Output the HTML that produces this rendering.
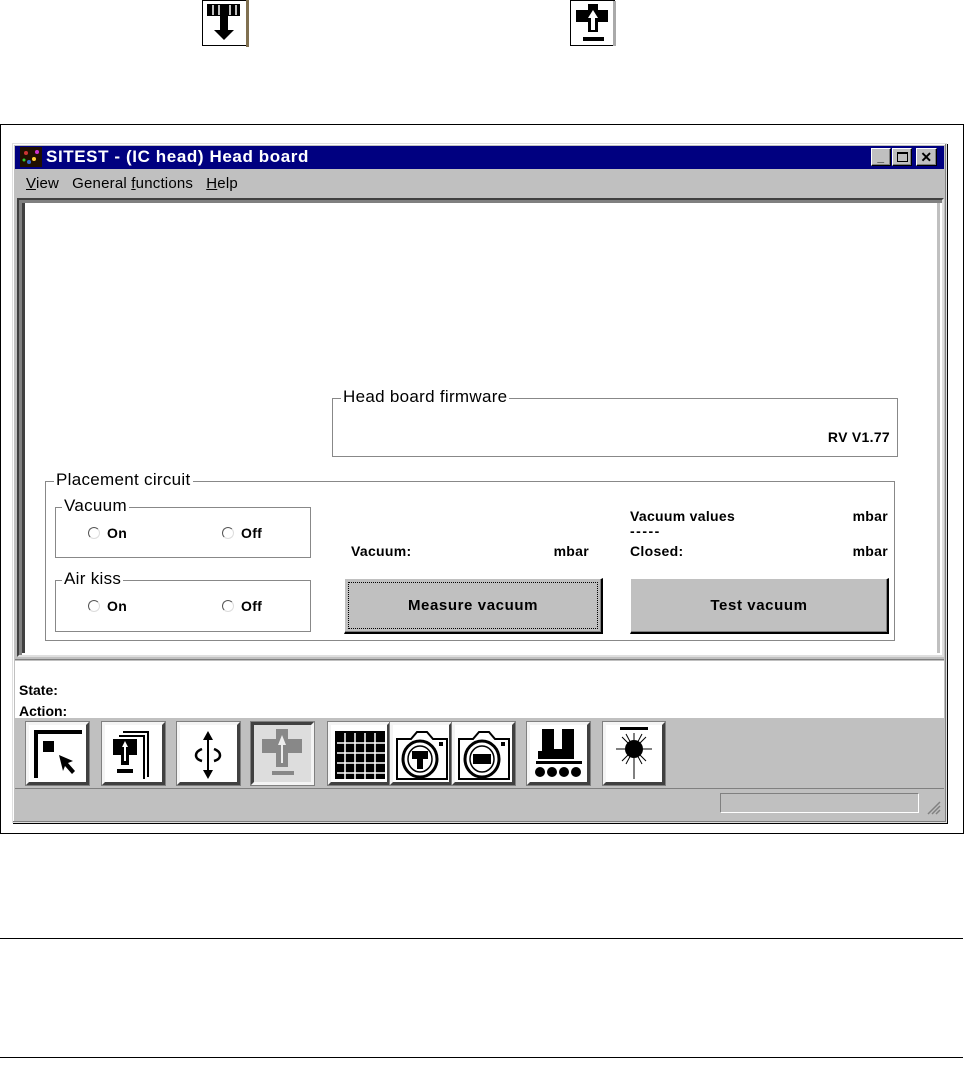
<!DOCTYPE html>
<html><head><meta charset="utf-8"><style>
*{margin:0;padding:0;box-sizing:border-box}
body{width:965px;height:1085px;background:#fff;position:relative;font-family:"Liberation Sans",sans-serif;overflow:hidden}
.a{position:absolute}
.t{position:absolute;font-size:13px;white-space:nowrap;color:#000}
.b{font-weight:bold;font-size:14px;letter-spacing:0.3px}
.r{text-align:right}
.grp{position:absolute;border:1px solid #888;box-shadow:1px 1px 0 #fff inset}
.lbl{position:absolute;background:#fff;font-size:17px;padding:0 2px;top:-12px;left:8px;line-height:19px;letter-spacing:0.3px}
.btn{position:absolute;background:#c0c0c0;border-top:1px solid #fff;border-left:1px solid #fff;border-right:2px solid #000;border-bottom:2px solid #000;box-shadow:inset -1px -1px 0 #808080;display:flex;align-items:center;justify-content:center;font-weight:bold;font-size:15px;letter-spacing:0.6px}
.tb{position:absolute;top:722px;height:63px;background:#fff;border:3px solid #c0c0c0;border-top-color:#f4f4f4;border-left-color:#f4f4f4;border-right-color:#404040;border-bottom-color:#404040;outline:1px solid #808080}
.radio{display:inline-block;width:12px;height:12px;border-radius:50%;border:1px solid #555;border-right-color:#ddd;border-bottom-color:#ddd;vertical-align:-1px;margin-right:7px;background:#fff}
</style></head><body>

<svg class="a" style="left:202px;top:0" width="47" height="47"><rect x="0.5" y="0.5" width="44" height="45" fill="#fff" stroke="#000"/><rect x="44" y="0" width="3" height="47" fill="#807050"/><path d="M5 4h33v12H26v14h6l-10 10-10-10h6V16H5z" fill="#000"/><path d="M11 5v10M17 5v10M28 5v10M34 5v10" stroke="#fff" stroke-width="1.5"/></svg>
<svg class="a" style="left:570px;top:0" width="47" height="47"><rect x="0.5" y="0.5" width="44" height="45" fill="#fff" stroke="#000"/><rect x="43" y="1" width="3" height="45" fill="#aaa"/><path d="M18 4h10v6h10v12H28v10h-10V22H6V10h12z" fill="#000"/><path d="M23 10l-5 8h3v12h4V18h3z" fill="#fff"/><rect x="13" y="37" width="21" height="4" fill="#000"/></svg>

<div class="a" style="left:0;top:124px;width:964px;height:710px;border:1px solid #000"></div>

<div class="a" style="left:12px;top:143px;width:935px;height:680px;background:#c0c0c0;border:1px solid #dfdfdf;box-shadow:1px 1px 0 #000,inset -1px -1px 0 #808080,inset 1px 1px 0 #fff"></div>
<div class="a" style="left:15px;top:146px;width:929px;height:23px;background:#000080"></div>
<svg class="a" style="left:20px;top:147px" width="22" height="20"><rect width="22" height="20" fill="#201000"/><circle cx="6" cy="6" r="2" fill="#c33"/><circle cx="14" cy="12" r="2" fill="#fc3"/><circle cx="9" cy="15" r="2" fill="#36c"/><circle cx="17" cy="5" r="2" fill="#c3c"/><circle cx="4" cy="13" r="1.5" fill="#3c3"/></svg>
<div class="t" style="left:46px;top:147px;color:#fff;font-weight:bold;font-size:17px;letter-spacing:0.6px">SITEST - (IC head) Head board</div>
<div class="btn" style="left:871px;top:148px;width:20px;height:18px;font-size:12px;border-right-width:1px;border-bottom-width:1px">_</div>
<div class="btn" style="left:892px;top:148px;width:20px;height:18px;border-right-width:1px;border-bottom-width:1px"><div style="width:11px;height:10px;border:1px solid #000;border-top-width:2px"></div></div>
<div class="btn" style="left:916px;top:148px;width:21px;height:18px;font-size:14px;border-right-width:1px;border-bottom-width:1px">✕</div>

<div class="t" style="left:26px;top:175px;font-size:15px;letter-spacing:0.2px"><u>V</u>iew&nbsp;&nbsp; General <u>f</u>unctions&nbsp;&nbsp; <u>H</u>elp</div>

<div class="a" style="left:17px;top:198px;width:927px;height:459px;background:#fff;border:2px solid #404040;border-right-color:#dfdfdf;border-bottom-color:#dfdfdf;box-shadow:inset 3px 3px 0 #808080"></div>
<div class="a" style="left:22px;top:203px;width:3px;height:450px;background:#404040"></div>
<div class="a" style="left:937px;top:203px;width:3px;height:450px;background:#c0c0c0"></div>

<div class="grp" style="left:332px;top:398px;width:566px;height:59px"><div class="lbl">Head board firmware</div></div>
<div class="t b r" style="left:690px;width:200px;top:429px">RV V1.77</div>

<div class="grp" style="left:45px;top:481px;width:850px;height:160px"><div class="lbl" style="left:8px">Placement circuit</div></div>
<div class="grp" style="left:55px;top:507px;width:256px;height:51px"><div class="lbl" style="left:6px">Vacuum</div></div>
<div class="t b" style="left:88px;top:525px"><span class="radio"></span>On</div>
<div class="t b" style="left:222px;top:525px"><span class="radio"></span>Off</div>
<div class="grp" style="left:55px;top:580px;width:256px;height:52px"><div class="lbl" style="left:6px">Air kiss</div></div>
<div class="t b" style="left:88px;top:598px"><span class="radio"></span>On</div>
<div class="t b" style="left:222px;top:598px"><span class="radio"></span>Off</div>

<div class="t b" style="left:351px;top:543px">Vacuum:</div>
<div class="t b r" style="left:489px;width:100px;top:543px">mbar</div>
<div class="btn" style="left:344px;top:578px;width:259px;height:56px"><div style="position:absolute;left:3px;top:3px;right:3px;bottom:3px;border:1px dotted #000"></div>Measure vacuum</div>
<div class="t b" style="left:630px;top:508px">Vacuum values</div>
<div class="t b r" style="left:788px;width:100px;top:508px">mbar</div>
<div class="t b" style="left:630px;top:523px;letter-spacing:1.5px">-----</div>
<div class="t b" style="left:630px;top:543px">Closed:</div>
<div class="t b r" style="left:788px;width:100px;top:543px">mbar</div>
<div class="btn" style="left:630px;top:578px;width:259px;height:56px">Test vacuum</div>

<div class="a" style="left:15px;top:659px;width:929px;height:3px;border-top:1px solid #808080;border-bottom:1px solid #fff"></div>
<div class="a" style="left:15px;top:662px;width:929px;height:56px;background:#fff"></div>
<div class="t b" style="left:19px;top:682px;letter-spacing:0">State:</div>
<div class="t b" style="left:19px;top:703px;letter-spacing:0">Action:</div>

<div class="tb" style="left:26px;width:63px"><svg width="57" height="57"><path d="M5 5h48v4H9v44H5z" fill="#000"/><rect x="14" y="16" width="11" height="11" fill="#000"/><path d="M30 30l14 6-5 2 7 8-3 3-7-8-2 5z" fill="#000"/></svg></div>
<div class="tb" style="left:102px;width:63px"><svg width="57" height="57"><path d="M18 6h26v46h-2V8H18zM14 10h26v44h-2V12H14z" fill="#000"/><path d="M8 14h24v16H24v10h-8V30H8z" fill="#000"/><path d="M20 16l-3 6h2v14h2V22h2z" fill="#fff"/><rect x="12" y="44" width="16" height="4" fill="#000"/></svg></div>
<div class="tb" style="left:177px;width:63px"><svg width="57" height="57"><path d="M28 6l-5 9h4v30h-4l5 9 5-9h-4V15h4z" fill="#000"/><path d="M22 24c-8 3-8 10 0 12M34 24c8 3 8 10 0 12" fill="none" stroke="#000" stroke-width="2.5"/></svg></div>
<div class="tb" style="left:251px;width:63px;background:#ddd;border-color:#404040 #f4f4f4 #f4f4f4 #404040"><svg width="57" height="57"><path d="M22 4h12v10h14v14H34v14H22V28H8V14h14z" fill="#888"/><path d="M28 10l-4 10h3v18h2V20h3z" fill="#eee"/><rect x="18" y="46" width="22" height="4" fill="#888"/></svg></div>
<div class="tb" style="left:328px;width:62px"><svg width="56" height="57"><rect x="4" y="6" width="50" height="48" fill="#000"/><path d="M14 8v46M24 8v46M34 8v46M44 8v46M6 18h48M6 28h48M6 38h48M6 48h48" stroke="#fff" stroke-width="1.5"/></svg></div>
<div class="tb" style="left:390px;width:62px"><svg width="56" height="57"><path d="M4 14h14l6-7h10l6 7h14v40H4z" fill="none" stroke="#000" stroke-width="2"/><rect x="46" y="17" width="4" height="4"/><ellipse cx="27" cy="34" rx="17" ry="18" fill="none" stroke="#000" stroke-width="3"/><ellipse cx="27" cy="34" rx="12" ry="13" fill="none" stroke="#000" stroke-width="1.5"/><path d="M19 26h16v8h-5v10h-6V34h-5z"/></svg></div>
<div class="tb" style="left:452px;width:63px"><svg width="57" height="57"><path d="M4 14h14l6-7h10l6 7h14v40H4z" fill="none" stroke="#000" stroke-width="2"/><rect x="46" y="17" width="4" height="4"/><ellipse cx="27" cy="34" rx="17" ry="18" fill="none" stroke="#000" stroke-width="3"/><ellipse cx="27" cy="34" rx="12" ry="13" fill="none" stroke="#000" stroke-width="1.5"/><rect x="18" y="29" width="18" height="10"/></svg></div>
<div class="tb" style="left:527px;width:63px"><svg width="57" height="57"><path d="M12 4h12v20h8V4h12v30H8V26h4z" fill="#000"/><rect x="6" y="36" width="46" height="3"/><circle cx="10" cy="47" r="5"/><circle cx="22" cy="47" r="5"/><circle cx="34" cy="47" r="5"/><circle cx="46" cy="47" r="5"/></svg></div>
<div class="tb" style="left:603px;width:62px"><svg width="56" height="57"><rect x="14" y="2" width="28" height="3"/><circle cx="28" cy="24" r="9"/><path d="M28 8v46M10 24h36M16 12l24 24M40 12L16 36M20 9l16 30M36 9L20 39" stroke="#000" stroke-width="1"/></svg></div>

<div class="a" style="left:15px;top:788px;width:929px;height:1px;background:#808080"></div>
<div class="a" style="left:720px;top:793px;width:199px;height:20px;border:1px solid #808080;border-right-color:#fff;border-bottom-color:#fff"></div>
<svg class="a" style="left:926px;top:800px" width="15" height="15"><path d="M14 2L2 14M14 6L6 14M14 10l-4 4" stroke="#808080" stroke-width="1.5"/></svg>

<div class="a" style="left:0;top:938px;width:963px;height:1px;background:#000"></div>
<div class="a" style="left:0;top:1057px;width:963px;height:1px;background:#000"></div>
</body></html>
